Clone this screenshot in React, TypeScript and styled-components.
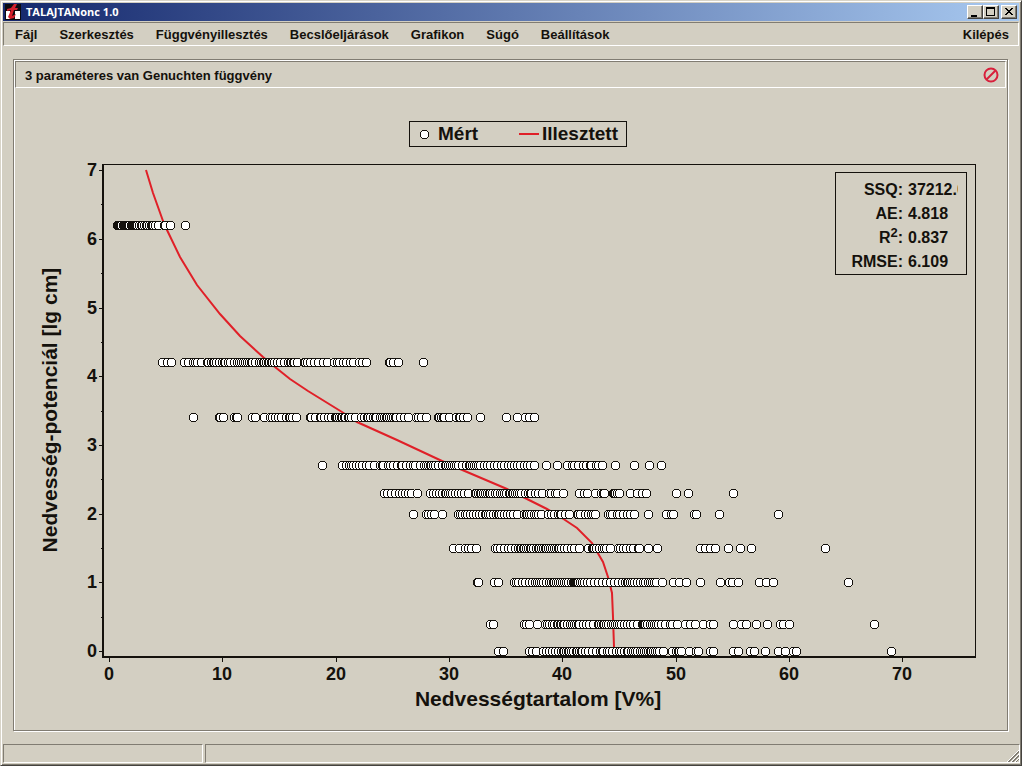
import React from "react";
import styled, { createGlobalStyle, css } from "styled-components";

const face = "#d3cfc2";
const shade = "#807c72";
const light = "#ffffff";
const ink = "#14110c";
const red = "#e02028";

const GlobalStyle = createGlobalStyle`
  * { box-sizing: border-box; }
  body {
    margin: 0;
    background: ${face};
    color: ${ink};
    font-family: "Liberation Sans", Arial, sans-serif;
  }
  button { font: inherit; color: inherit; }
`;

const sunken = css`
  border: 1px solid;
  border-color: ${shade} ${light} ${light} ${shade};
`;

const Window = styled.div`
  display: flex;
  flex-direction: column;
  min-height: 100vh;
  padding: 1px 1px 2px 0;
  background: ${face};
  border: 1px solid;
  border-color: #d8d4c8 #45433f #45433f #d8d4c8;
  box-shadow: inset 1px 1px 0 ${light}, inset -1px -1px 0 ${shade};
`;

const TitleBar = styled.header`
  display: flex;
  align-items: center;
  height: 18px;
  margin: 1px 1px 1px 2px;
  padding: 0 2px;
  background: linear-gradient(to right, #14276c, #a8c9f0);
`;

const AppTitle = styled.h1`
  flex: 1;
  margin: 0 0 0 5px;
  color: #fff;
  font: bold 11px/18px "Open Sans", "Noto Sans", sans-serif;
`;

const CaptionButtons = styled.div`
  display: flex;
`;

const CaptionButton = styled.button<{ $apart?: boolean }>`
  display: flex;
  width: 16px;
  height: 14px;
  margin-left: ${(p) => (p.$apart ? 2 : 0)}px;
  padding: 1px;
  background: ${face};
  border: 1px solid;
  border-color: ${light} #45433f #45433f ${light};
  box-shadow: inset -1px -1px 0 ${shade};
`;

const MenuBar = styled.nav`
  ${sunken}
  display: flex;
  gap: 22px;
  height: 24px;
  margin: 0 1px 0 2px;
  padding: 1px 9px 0 11px;
`;

const MenuItem = styled.button<{ $end?: boolean }>`
  margin-left: ${(p) => (p.$end ? "auto" : "0")};
  padding: 0;
  background: none;
  border: 0;
  font-size: 13px;
  font-weight: bold;
  line-height: 21px;
`;

const Panel = styled.main`
  display: flex;
  flex: 1;
  flex-direction: column;
  margin: 13px 12px 13px 12px;
  border: 1px solid ${shade};
  box-shadow: 1px 1px 0 ${light}, inset 1px 1px 0 ${light};
  padding: 1px 0 0 1px;
`;

const PanelHeader = styled.div`
  ${sunken}
  display: flex;
  align-items: center;
  justify-content: space-between;
  height: 27px;
  margin-right: 1px;
  padding: 0 6px 0 9px;
`;

const PanelTitle = styled.h2`
  margin: 0;
  padding-top: 2px;
  font-size: 13px;
  line-height: 24px;
`;

const CloseButton = styled.button`
  display: flex;
  padding: 0;
  background: none;
  border: 0;
`;

const Legend = styled.ul`
  display: flex;
  align-self: center;
  justify-content: space-between;
  width: 218px;
  height: 26px;
  margin: 33px 0 0 14px;
  padding: 0 8px 0 10px;
  border: 1px solid ${ink};
  list-style: none;
`;

const LegendItem = styled.li<{ $gap: number }>`
  display: flex;
  align-items: center;
  gap: ${(p) => p.$gap}px;
  font-size: 19px;
  font-weight: bold;
  line-height: 24px;
`;

const ChartArea = styled.div`
  position: relative;
  flex: 1;
`;

const Plot = styled.svg`
  display: block;
  width: 100%;
  font-weight: bold;
`;

const Stats = styled.dl`
  position: absolute;
  top: 25px;
  right: 40px;
  display: grid;
  grid-template-columns: 67px 50px;
  column-gap: 5px;
  width: 132px;
  height: 103px;
  margin: 0;
  padding: 5px 0 0;
  border: 1px solid ${ink};
  font-size: 16px;
  font-weight: bold;
  line-height: 24px;
`;

const StatName = styled.dt`
  height: 24px;
  text-align: right;
`;

const StatValue = styled.dd`
  height: 24px;
  margin: 0;
  overflow: hidden;
  white-space: nowrap;
`;

const Power = styled.sup`
  font-size: 13px;
  line-height: 0;
`;

const StatusBar = styled.footer`
  display: flex;
  gap: 2px;
  height: 19px;
  margin: 0 0 0 2px;
`;

const StatusCell = styled.div<{ $grow?: boolean }>`
  ${sunken}
  display: flex;
  align-items: flex-end;
  justify-content: flex-end;
  flex: ${(p) => (p.$grow ? "1" : "0 0 200px")};
`;

const menus = [
  "Fájl",
  "Szerkesztés",
  "Függvényillesztés",
  "Becslőeljárások",
  "Grafikon",
  "Súgó",
  "Beállítások",
];

/* Measured points: one row per potential, positions along the x axis. */
const rows: { y: number; xs: string }[] = [
  { y: 225, xs: "117 118 119 120 121 123 124 125 126 127 128 129 131 132 133 134 135 136 137 139 141 142 144 146 147 149 151 152 153 155 158 164 165 170 185" },
  { y: 362, xs: "162 167 171 184 188 193 195 197 201 207 208 211 213 214 216 219 222 224 225 228 230 234 237 239 241 243 245 247 249 251 252 255 259 261 263 264 266 268 269 271 272 274 277 280 284 288 290 291 293 294 297 304 305 307 310 314 318 323 327 334 337 339 343 346 350 353 359 362 366 389 390 393 398 423" },
  { y: 417, xs: "193 219 220 223 234 236 237 252 255 264 270 272 275 278 281 286 289 290 292 296 310 311 315 320 321 324 328 331 335 336 337 339 341 342 344 345 348 349 351 355 361 364 367 368 370 373 375 376 380 382 384 386 387 389 391 393 395 396 400 404 408 416 418 421 426 438 439 441 443 444 449 456 459 460 463 467 480 506 517 525 529 534" },
  { y: 465, xs: "322 342 346 349 351 353 356 359 362 366 369 374 380 382 383 388 390 393 397 401 402 406 410 413 415 420 424 426 428 430 431 433 435 438 442 445 446 448 450 452 454 456 458 462 466 469 470 472 474 476 478 480 484 487 490 494 497 501 504 508 511 514 517 520 524 527 530 534 546 557 567 572 574 578 583 586 590 591 596 598 602 615 634 649 661" },
  { y: 493, xs: "384 387 391 395 399 402 405 408 411 417 430 433 436 439 442 445 446 448 450 452 455 458 461 464 468 475 476 478 480 481 483 485 487 489 490 492 495 497 500 502 504 506 509 510 512 513 515 517 519 521 525 528 530 531 535 538 542 549 551 555 557 563 579 584 587 595 601 603 604 613 614 615 617 619 630 637 642 646 676 688 733" },
  { y: 514, xs: "413 426 428 431 434 442 458 460 462 465 467 470 473 476 479 482 485 486 488 490 493 496 498 499 501 504 507 510 513 517 524 526 527 529 531 534 536 538 541 548 551 554 558 560 561 565 569 577 578 580 585 588 591 593 595 608 610 612 617 619 623 627 630 634 648 666 671 673 694 696 719 778" },
  { y: 548, xs: "453 459 465 468 471 476 495 497 500 504 508 511 515 518 520 521 523 524 526 528 530 531 533 536 538 539 541 543 545 546 548 550 552 554 556 558 559 561 564 567 571 574 579 588 592 593 594 596 599 602 604 606 610 618 620 623 626 630 633 638 639 648 657 700 705 710 715 728 740 751 825" },
  { y: 582, xs: "477 478 494 498 514 516 518 522 525 529 532 535 537 539 541 543 546 549 551 553 554 556 558 560 562 564 566 568 571 573 574 575 576 577 578 580 582 584 587 590 594 598 602 606 610 614 618 622 625 627 628 630 632 634 637 640 643 645 648 650 652 654 656 662 673 679 686 700 720 729 732 738 759 766 773 848" },
  { y: 624, xs: "490 493 524 526 529 537 545 547 549 552 554 557 558 560 561 563 564 567 570 572 574 576 578 579 583 586 589 593 598 599 601 603 604 606 608 611 613 615 617 619 621 624 627 630 633 637 642 643 644 645 647 650 652 654 656 658 661 665 670 672 677 685 690 695 703 710 713 733 741 746 756 767 780 783 789 874" },
  { y: 651, xs: "498 503 529 532 536 543 546 549 552 555 558 561 563 564 566 568 569 571 573 576 577 579 581 582 585 588 592 596 600 602 603 607 609 612 616 619 621 624 627 628 631 633 635 637 640 642 644 646 648 650 651 653 655 657 659 663 672 676 678 679 681 689 696 698 710 713 733 738 750 754 765 778 785 793 796 891" },
];

const curve =
  "146,170 153,193 163,221 167,230 180,257 197,285 220,314 240,336 263,357 275,367 290,379 308,391 342,412 357,422 397,440 442,461 460,469 507,489 523,497 547,509 562,518 577,528 592,543 603,562 608,577 612,593 613,617 614,647";

const xTicks = [0, 10, 20, 30, 40, 50, 60, 70];
const yTicks = [0, 1, 2, 3, 4, 5, 6, 7];
const xAt = (v: number) => Math.round(109 + v * 11.33);
const yAt = (v: number) => Math.round(651 - v * 68.7);

const Point = ({ x, y }: { x: number; y: number }) => (
  <g transform={`translate(${x} ${y})`}>
    <path d="M-2-4H3V-3H4V-2H5V3H4V4H3V5H-2V4H-3V3H-4V-2H-3V-3H-2Z" fill={ink} />
    <path d="M-2-3H3V-2H4V3H3V4H-2V3H-3V-2H-2Z" fill="#fff" />
  </g>
);

const AppIcon = () => (
  <svg width="16" height="16" viewBox="0 0 16 16" aria-hidden="true">
    <rect width="16" height="16" fill="#0b0b10" />
    <path d="M1 7H5V15H1ZM10 7H15V15H10Z" fill="#fff" />
    <path d="M2 5L6 4L9 0H12L10 4H13L12 6H9L7 12L11 10L9 14L5 15L3 13L6 6L2 7Z" fill="#d3202c" />
  </svg>
);

const Chart = () => (
  <Plot viewBox="15 147 992 582" role="img" aria-label="Nedvesség-potenciál [lg cm] – Nedvességtartalom [V%]">
    <g shapeRendering="crispEdges" fill={ink}>
      <rect x="102" y="164" width="874" height="1" />
      <rect x="975" y="164" width="1" height="494" />
      <rect x="102" y="165" width="2" height="493" />
      <rect x="102" y="656" width="874" height="2" />
      {xTicks.map((v) => (
        <rect key={v} x={xAt(v)} y="658" width="1" height="4" />
      ))}
      {yTicks.map((v) => (
        <rect key={v} x="99" y={yAt(v)} width="3" height="1" />
      ))}
      {yTicks.slice(0, 7).map((v) => (
        <rect key={v} x="101" y={yAt(v + 0.5)} width="1" height="1" />
      ))}
    </g>
    <g fontSize="18" fill={ink} textAnchor="middle">
      {xTicks.map((v) => (
        <text key={v} x={xAt(v)} y="680">{v}</text>
      ))}
    </g>
    <g fontSize="18" fill={ink} textAnchor="end">
      {yTicks.map((v) => (
        <text key={v} x="97" y={yAt(v) + 6}>{v}</text>
      ))}
    </g>
    <g fontSize="21" fill={ink} textAnchor="middle">
      <text x="538" y="706">Nedvességtartalom [V%]</text>
      <text transform="translate(57 410) rotate(-90)">Nedvesség-potenciál [lg cm]</text>
    </g>
    <polyline points={curve} fill="none" stroke={red} strokeWidth="2" />
    <g shapeRendering="crispEdges">
      {rows.map((row) =>
        row.xs.split(" ").map((x) => <Point key={`${row.y}-${x}`} x={Number(x)} y={row.y} />)
      )}
    </g>
  </Plot>
);

export default function App() {
  return (
    <>
      <GlobalStyle />
      <Window>
        <TitleBar>
          <AppIcon />
          <AppTitle>TALAJTANonc 1.0</AppTitle>
          <CaptionButtons>
            <CaptionButton type="button" aria-label="Minimize">
              <svg width="12" height="10" viewBox="0 0 12 10" shapeRendering="crispEdges">
                <rect x="2" y="8" width="6" height="2" fill="#000" />
              </svg>
            </CaptionButton>
            <CaptionButton type="button" aria-label="Maximize">
              <svg width="12" height="10" viewBox="0 0 12 10" shapeRendering="crispEdges">
                <path d="M1 0H10V9H1ZM2 2V8H9V2Z" fill="#000" fillRule="evenodd" />
              </svg>
            </CaptionButton>
            <CaptionButton type="button" aria-label="Close" $apart>
              <svg width="12" height="10" viewBox="0 0 12 10" shapeRendering="crispEdges">
                <path
                  d="M2 1H4V2H5V3H7V2H8V1H10V2H9V3H8V4H7V5H8V6H9V7H10V8H8V7H7V6H5V7H4V8H2V7H3V6H4V5H5V4H4V3H3V2H2Z"
                  fill="#000"
                />
              </svg>
            </CaptionButton>
          </CaptionButtons>
        </TitleBar>

        <MenuBar>
          {menus.map((m) => (
            <MenuItem key={m} type="button">{m}</MenuItem>
          ))}
          <MenuItem type="button" $end>Kilépés</MenuItem>
        </MenuBar>

        <Panel>
          <PanelHeader>
            <PanelTitle>3 paraméteres van Genuchten függvény</PanelTitle>
            <CloseButton type="button" aria-label="Bezárás">
              <svg width="16" height="16" viewBox="0 0 16 16" fill="none" stroke="#d8203c" strokeWidth="2">
                <circle cx="8" cy="8" r="6.5" />
                <path d="M3.5 12.5L12.5 3.5" />
              </svg>
            </CloseButton>
          </PanelHeader>

          <Legend>
            <LegendItem $gap={9}>
              <svg width="9" height="9" viewBox="-4 -4 9 9" shapeRendering="crispEdges" aria-hidden="true">
                <Point x={0} y={0} />
              </svg>
              Mért
            </LegendItem>
            <LegendItem $gap={3}>
              <svg width="20" height="2" viewBox="0 0 20 2" aria-hidden="true">
                <rect width="20" height="2" fill={red} />
              </svg>
              Illesztett
            </LegendItem>
          </Legend>

          <ChartArea>
            <Chart />
            <Stats>
              <StatName>SSQ:</StatName>
              <StatValue>37212.0</StatValue>
              <StatName>AE:</StatName>
              <StatValue>4.818</StatValue>
              <StatName>R<Power>2</Power>:</StatName>
              <StatValue>0.837</StatValue>
              <StatName>RMSE:</StatName>
              <StatValue>6.109</StatValue>
            </Stats>
          </ChartArea>
        </Panel>

        <StatusBar>
          <StatusCell />
          <StatusCell $grow>
            <svg width="12" height="12" viewBox="0 0 12 12" aria-hidden="true">
              <path d="M0 12L12 0M4 12L12 4M8 12L12 8" stroke={light} />
              <path d="M1 12L12 1M2 12L12 2M5 12L12 5M6 12L12 6M9 12L12 9" stroke={shade} />
            </svg>
          </StatusCell>
        </StatusBar>
      </Window>
    </>
  );
}
